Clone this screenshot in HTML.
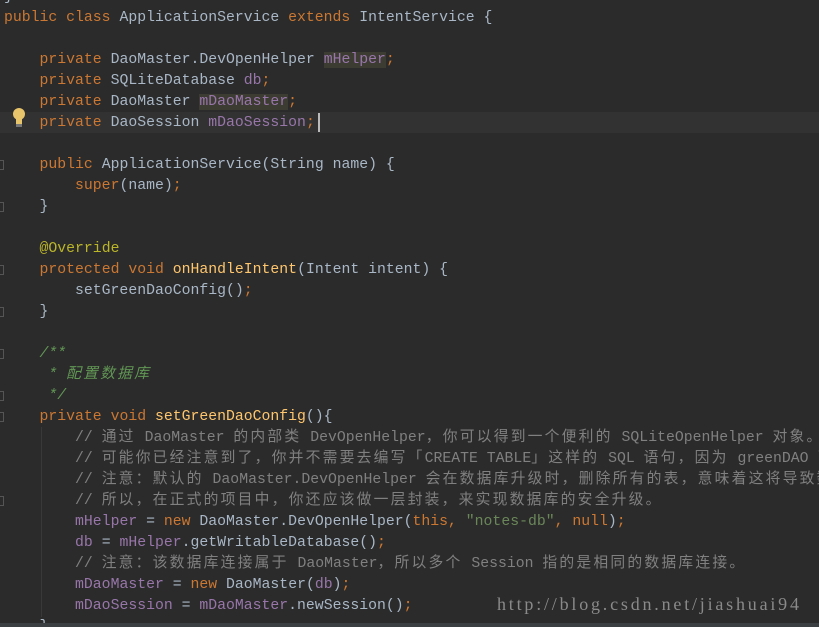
<!DOCTYPE html>
<html><head><meta charset="utf-8"><style>
html,body{margin:0;padding:0;background:#2b2b2b;width:819px;height:627px;overflow:hidden;position:relative}
.code{position:absolute;left:4px;top:-13px;width:815px;height:640px;overflow:hidden;font-family:"Liberation Mono","Noto Sans CJK SC",monospace;font-size:14.8px;line-height:21px;color:#a9b7c6}
.l{height:21px;white-space:pre;overflow:hidden}
.k{color:#cc7832}.f{color:#9876aa}.m{color:#ffc66d}.c{color:#808080}.cs{color:#629755;font-style:italic}.s{color:#6a8759}.a{color:#bbb529}
.z{letter-spacing:2.2px}
.h{background:#3d3c33}
.cur{position:absolute;left:0;top:112px;width:819px;height:21px;background:#323232}
.guide{position:absolute;left:41px;top:427px;width:1px;height:190px;background:#393939}
.wm{position:absolute;left:497px;top:594px;font-family:"Liberation Serif",serif;font-size:18px;color:#8a8a8a;letter-spacing:2.8px}
.bottom{position:absolute;left:0;top:623px;width:819px;height:4px;background:#3c3f41}
.caret{position:absolute;left:318px;top:113px;width:2px;height:19px;background:#bbb}
.gm{position:absolute;left:0;width:3px;height:8px;border:1px solid #555;border-left:none}
</style></head><body>
<div class="cur"></div>
<div class="guide"></div>
<svg style="position:absolute;left:11px;top:107px" width="16" height="22" viewBox="0 0 16 22"><circle cx="8" cy="7" r="6" fill="#e8c46a"/><rect x="5" y="12" width="6" height="5" fill="#e8c46a"/><rect x="5" y="17" width="6" height="3" fill="#777"/></svg>
<div class="gm" style="top:160px"></div><div class="gm" style="top:202px"></div>
<div class="gm" style="top:265px"></div><div class="gm" style="top:307px"></div>
<div class="gm" style="top:349px"></div><div class="gm" style="top:391px"></div>
<div class="gm" style="top:412px"></div><div class="gm" style="top:496px"></div>
<div class="code"><div class="l">}</div><div class="l"><span class="k">public class </span>ApplicationService <span class="k">extends </span>IntentService {</div><div class="l"> </div><div class="l">    <span class="k">private </span>DaoMaster.DevOpenHelper <span class="f h">mHelper</span><span class="k">;</span></div><div class="l">    <span class="k">private </span>SQLiteDatabase <span class="f">db</span><span class="k">;</span></div><div class="l">    <span class="k">private </span>DaoMaster <span class="f h">mDaoMaster</span><span class="k">;</span></div><div class="l">    <span class="k">private </span>DaoSession <span class="f">mDaoSession</span><span class="k">;</span></div><div class="l"> </div><div class="l">    <span class="k">public </span>ApplicationService(String name) {</div><div class="l">        <span class="k">super</span>(name)<span class="k">;</span></div><div class="l">    }</div><div class="l"> </div><div class="l">    <span class="a">@Override</span></div><div class="l">    <span class="k">protected void </span><span class="m">onHandleIntent</span>(Intent intent) {</div><div class="l">        setGreenDaoConfig()<span class="k">;</span></div><div class="l">    }</div><div class="l"> </div><div class="l">    <span class="cs">/**</span></div><div class="l">    <span class="cs"> * <span class="z">配置数据库</span></span></div><div class="l">    <span class="cs"> */</span></div><div class="l">    <span class="k">private void </span><span class="m">setGreenDaoConfig</span>(){</div><div class="l">        <span class="c">// <span class="z">通过</span> DaoMaster <span class="z">的内部类</span> DevOpenHelper<span class="z">，你可以得到一个便利的</span> SQLiteOpenHelper <span class="z">对象。</span></span></div><div class="l">        <span class="c">// <span class="z">可能你已经注意到了，你并不需要去编写「</span>CREATE TABLE<span class="z">」这样的</span> SQL <span class="z">语句，因为</span> greenDAO <span class="z">已经帮你做了。</span></span></div><div class="l">        <span class="c">// <span class="z">注意：默认的</span> DaoMaster.DevOpenHelper <span class="z">会在数据库升级时，删除所有的表，意味着这将导致数据的丢失。</span></span></div><div class="l">        <span class="c">// <span class="z">所以，在正式的项目中，你还应该做一层封装，来实现数据库的安全升级。</span></span></div><div class="l">        <span class="f">mHelper </span>= <span class="k">new </span>DaoMaster.DevOpenHelper(<span class="k">this, </span><span class="s">"notes-db"</span><span class="k">, null</span>)<span class="k">;</span></div><div class="l">        <span class="f">db </span>= <span class="f">mHelper</span>.getWritableDatabase()<span class="k">;</span></div><div class="l">        <span class="c">// <span class="z">注意：该数据库连接属于</span> DaoMaster<span class="z">，所以多个</span> Session <span class="z">指的是相同的数据库连接。</span></span></div><div class="l">        <span class="f">mDaoMaster </span>= <span class="k">new </span>DaoMaster(<span class="f">db</span>)<span class="k">;</span></div><div class="l">        <span class="f">mDaoSession </span>= <span class="f">mDaoMaster</span>.newSession()<span class="k">;</span></div><div class="l">    }</div></div>
<div class="caret"></div>
<div class="wm">http://blog.csdn.net/jiashuai94</div>
<div class="bottom"></div>
</body></html>
